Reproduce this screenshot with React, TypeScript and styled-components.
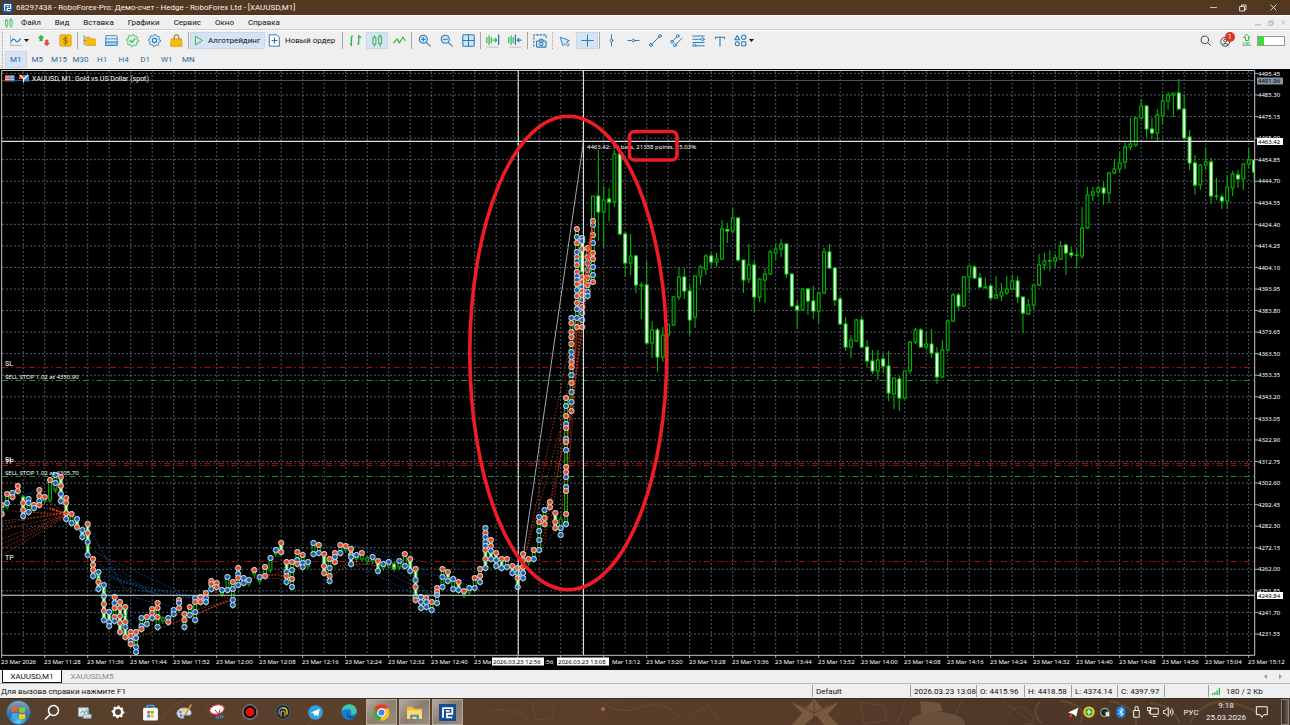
import React from "react";
import styled, { createGlobalStyle, css } from "styled-components";

const Global = createGlobalStyle`
  * { box-sizing: border-box; }
  body { margin: 0; background: #efefef; font-family: Roboto, "Noto Sans", sans-serif; font-size: 8px; color: #111; }
  button { font: inherit; color: inherit; border: 0; padding: 0; background: none; }
  svg { display: block; }
`;

const blue = "#2a7ab8";
const green = "#2db84a";

/* ---------- frame ---------- */

const Page = styled.div`
  display: flex;
  flex-direction: column;
  min-height: 100vh;
`;
const TitleBar = styled.header`
  display: flex;
  align-items: center;
  height: 15px;
  padding-left: 2px;
  gap: 3px;
  background: #523721;
  color: #f6f1ec;
`;
const Title = styled.h1`
  margin: 0;
  flex: 1;
  font-size: 8px;
  line-height: 12px;
  font-weight: 400;
  white-space: nowrap;
`;
const WindowButtons = styled.div`
  display: flex;
  padding-right: 2px;
`;
const WindowButton = styled.button`
  display: grid;
  place-items: center;
  width: 30px;
  height: 15px;
`;
const MenuBar = styled.nav`
  display: flex;
  align-items: center;
  height: 15px;
  padding-left: 4px;
  border-top: 1px solid #fff;
  border-bottom: 1px solid #cfcfcf;
`;
const MenuIcon = styled.span`
  width: 10px;
  margin-right: 7px;
`;
const MenuItem = styled.button`
  margin-right: 14px;
  line-height: 12px;
  white-space: nowrap;
`;
const MdiButtons = styled.div`
  display: flex;
  margin-left: auto;
`;
const MdiButton = styled.button`
  display: grid;
  place-items: center;
  width: 13px;
  height: 12px;
`;
const Toolbar = styled.div`
  display: flex;
  align-items: center;
  height: 20px;
  border-top: 1px solid #fff;
`;
const Handle = styled.span`
  width: 1px;
  height: 17px;
  margin: 0 2px;
  border-left: 1px dotted #9a9a9a;
`;
const Sep = styled.span<{ $dotted?: boolean }>`
  width: 1px;
  height: 17px;
  margin: 0 1px;
  border-left: 1px ${(p) => (p.$dotted ? "dotted" : "solid")} #a6a6a6;
`;
const Group = styled.div<{ $w: number }>`
  display: flex;
  width: ${(p) => p.$w}px;
`;
const active = css`
  background: #d5e3f2;
  box-shadow: inset 0 0 0 1px #c6d9ec;
`;
const Tool = styled.button<{ $on?: boolean }>`
  display: flex;
  flex: 1;
  min-width: 0;
  height: 17px;
  align-items: center;
  justify-content: center;
  gap: 2px;
  ${(p) => p.$on && active}
`;
const WideTool = styled.button<{ $on?: boolean; $w: number }>`
  display: flex;
  width: ${(p) => p.$w}px;
  height: 17px;
  align-items: center;
  gap: 4px;
  padding-left: 3px;
  white-space: nowrap;
  ${(p) => p.$on && active}
`;
const ToolRight = styled.div`
  display: flex;
  align-items: center;
  gap: 9px;
  margin-left: auto;
  padding-right: 5px;
`;
const Account = styled.button`
  position: relative;
  width: 14px;
  height: 14px;
`;
const Badge = styled.span`
  position: absolute;
  top: -2px;
  right: -1px;
  width: 10px;
  height: 10px;
  border-radius: 5px;
  background: #dc3620;
  color: #fff;
  font-size: 8px;
  line-height: 10px;
  text-align: center;
`;
const Level = styled.span`
  display: flex;
  flex-direction: column;
  align-items: center;
  color: ${green};
  font-size: 5px;
  font-weight: 700;
  line-height: 5px;
`;
const Battery = styled.span`
  width: 28px;
  height: 10px;
  margin-left: -3px;
  border: 1px solid #999;
  background: linear-gradient(90deg, #3adf3a 6px, #fff 6px);
`;
const FrameBar = styled.div`
  display: flex;
  align-items: center;
  height: 19px;
`;
const FrameButton = styled.button<{ $on?: boolean }>`
  flex: 1;
  height: 17px;
  color: #1f6ba5;
  ${(p) => p.$on && active}
`;
const ChartArea = styled.main`
  flex: 1;
  background: #000;
`;
const ChartSvg = styled.svg`
  width: 100%;
  height: auto;
  font-family: "Noto Sans", sans-serif;
  font-size: 6px;
  fill: #fff;
`;
const PlotLabels = styled.g`
  font-family: Roboto, sans-serif;
  font-size: 7px;
`;
const Tabs = styled.div`
  display: flex;
  align-items: center;
  height: 14px;
  padding-left: 2px;
  border-bottom: 1px solid #b8b8b8;
`;
const Tab = styled.button<{ $on?: boolean }>`
  width: 60px;
  height: 13px;
  color: ${(p) => (p.$on ? "#111" : "#8b8b8b")};
  ${(p) =>
    p.$on &&
    css`
      background: #fff;
      border: 1px solid #111;
      border-top: 0;
    `}
`;
const TabArrows = styled.span`
  display: flex;
  gap: 10px;
  margin-left: auto;
  padding-right: 8px;
`;
const Status = styled.footer`
  display: flex;
  align-items: center;
  height: 14px;
`;
const StatusHint = styled.span`
  flex: 1;
  padding-left: 1px;
`;
const StatusCell = styled.span<{ $w: number }>`
  display: flex;
  align-items: center;
  gap: 6px;
  width: ${(p) => p.$w}px;
  height: 12px;
  padding-left: 3px;
  border-left: 1px solid #9c9c9c;
  white-space: nowrap;
`;

/* ---------- task bar ---------- */

const TaskBar = styled.div`
  position: relative;
  display: flex;
  align-items: stretch;
  height: 27px;
  padding-left: 1px;
  border-top: 1px solid #3b2d20;
  background: linear-gradient(90deg, #56402d, #5c3f2a 35%, #583c28 60%, #4d3728 80%, #4a382a);
  color: #f5f0ea;
  overflow: hidden;
`;
const Texture = styled.svg`
  position: absolute;
  right: 0;
  top: 0;
  width: 1290px;
  height: 26px;
`;
const TaskButton = styled.button<{ $on?: boolean }>`
  position: relative;
  display: grid;
  place-items: center;
  width: 31px;
  margin-right: 2px;
  ${(p) =>
    p.$on &&
    css`
      border: 1px solid #b3a89c;
      background: linear-gradient(135deg, #b5aba1, #8b7c6e 50%, #9b8e82);
    `}
`;
const StartButton = styled.button`
  position: relative;
  width: 35px;
  display: grid;
  place-items: center;
`;
const Tray = styled.div`
  position: relative;
  display: flex;
  align-items: center;
  margin-left: auto;
`;
const TrayButton = styled.button`
  display: grid;
  place-items: center;
  width: 16px;
  height: 26px;
`;
const Lang = styled.button`
  width: 28px;
`;
const Clock = styled.button`
  width: 42px;
  line-height: 12px;
  font-size: 8px;
`;
const Notify = styled.button`
  display: grid;
  place-items: center;
  width: 30px;
  height: 26px;
`;
const Desktop = styled.button`
  width: 8px;
  height: 26px;
  margin: 0 1px 0 4px;
  border: 1px solid #8d8177;
  background: linear-gradient(90deg, #30261f, #6c6056);
`;

/* ---------- icons ---------- */

const Ico = ({ s = 13, c = blue, w = 1, vb = 16, children }: { s?: number; c?: string; w?: number; vb?: number; children: React.ReactNode }) => (
  <svg width={s} height={s} viewBox={`0 0 ${vb} ${vb}`} fill="none" stroke={c} strokeWidth={w} strokeLinecap="round" strokeLinejoin="round">
    {children}
  </svg>
);
const Down = () => (
  <svg width="5" height="3" viewBox="0 0 5 3"><path d="M0 0h5L2.5 3z" fill="#111" /></svg>
);
const RoboLogo = ({ s = 12 }: { s?: number }) => (
  <svg width={s} height={s} viewBox="0 0 16 16">
    <rect width="16" height="16" fill="#134e90" />
    <path d="M3.800 13V3.800h8.700v5.400H7.500v3.300h5M6.500 6.500h3.500" fill="none" stroke="#fff" strokeWidth="1.700" />
  </svg>
);
const Candles = ({ s = 13 }: { s?: number }) => (
  <Ico s={s} c={green} w={1.3}>
    <rect x="2.500" y="4" width="3.500" height="8.500" rx=".6" /><rect x="9.500" y="3" width="3.500" height="9" rx=".6" />
    <path d="M4.200 2v2M4.200 12.500V15M11.200 1v2M11.200 12v3" />
  </Ico>
);
const gearPath = Array.from({ length: 32 }, (_, i) => {
  const r = i % 4 < 2 ? 7.4 : 5.9;
  const a = (i * Math.PI) / 16;
  return `${i ? "L" : "M"}${(8 + r * Math.cos(a)).toFixed(2)} ${(8 + r * Math.sin(a)).toFixed(2)}`;
}).join("") + "z";

const NodeLine = ({ d, pts }: { d: string; pts: [number, number][] }) => (
  <Ico w={1.2}>
    <path d={d} />
    {pts.map(([x, y], i) => <circle key={i} cx={x} cy={y} r="1.700" fill="#efefef" />)}
  </Ico>
);
const Restore = ({ s, c }: { s: number; c: string }) => (
  <Ico s={s} c={c} w={1.6}><path d="M2 5h9v9H2zM5 5V2h9v9h-3" strokeLinejoin="miter" /></Ico>
);
const Cross = ({ s, c }: { s: number; c: string }) => <Ico s={s} c={c} w={1.8}><path d="M2 2l12 12M14 2L2 14" /></Ico>;

/* ---------- chart data ---------- */

const STEP = 5.375;
const cx = (i: number) => 1.7 + STEP * i;

// [index, high, body top, body bottom, low, falling]
type Bar = [number, number, number, number, number, 0 | 1];
const bars: Bar[] = [
  [110,196,196,283,285,0],[111,150,196,212,241,1],[112,186,200,212,248,0],[113,188,199,202,221,1],[114,150,154,202,207,0],[115,154,154,234,235,1],
  [116,232,234,263,277,1],[117,234,256,263,275,0],[118,255,256,285,293,1],[119,282,285,286,319,0],[120,261,285,343,345,1],[121,321,330,343,358,0],
  [122,328,330,357,372,1],[123,327,335,357,362,0],[124,325,325,335,338,0],[125,296,297,325,326,0],[126,267,277,297,300,0],[127,268,277,291,299,1],
  [128,285,291,320,335,1],[129,275,276,317,328,0],[130,265,267,276,285,0],[131,254,256,269,275,0],[132,253,256,262,267,1],[133,253,259,262,267,0],
  [134,220,229,259,260,0],[135,223,229.500,231,243,1],[136,208,218,231,234,0],[137,218,218,260,262,1],[138,260,260,280,293,1],[139,244,265,279,283,0],
  [140,261,265,297,312,1],[141,278,279,297,302,0],[142,268,274,280,303,0],[143,250,252,274,275,0],[144,243,249,253,261,0],[145,239,244,249,257,0],
  [146,244,244,274,278,1],[147,274,274,306,307,1],[148,301,306,310,329,1],[149,288,289,310,311,0],[150,288,289,301,315,1],[151,286,301,311,319,1],
  [152,292,293,311,323,0],[153,248,252,293,294,0],[154,244,252,268,269,1],[155,268,268,300,306,1],[156,297,299,324,325,1],[157,317,324,347,351,1],
  [158,335,340,347,358,0],[159,319,320,341,342,0],[160,317,320,347,348,1],[161,340,347,361,367,1],[162,350,361,371,374,1],[163,350,360,371,380,0],
  [164,354,359,366,373,1],[165,351,366,393,401,1],[166,378,378,394,409,0],[167,376,379,398,411,1],[168,371,371,398,399,0],[169,341,342,371,374,0],
  [170,328,330,342,344,0],[171,328,330,347,348,1],[172,333,344,347,350,0],[173,329,344,353,358,1],[174,347,353,377,384,1],[175,340,350,377,378,0],
  [176,320,321,350,351,0],[177,293,295,321,322,0],[178,293,295,306,310,1],[179,276,277,306,307,0],[180,266,266,277,293,0],[181,265,267,278,279,1],
  [182,273,278,287,288,1],[183,278,287,287.500,289,0],[184,284,286,298,301,1],[185,276,295,298,299,0],[186,283,292,296,301,0],[187,276,289,293,295,0],
  [188,275,281,289,290,0],[189,276,281,297,303,1],[190,297,297,313,333,1],[191,299,305,314,315,0],[192,285,285,305,310,0],[193,254,265,285,286,0],
  [194,253,261,265,270,0],[195,250,260.500,261,271,0],[196,254,258,261,267,0],[197,241,246,259,260,0],[198,244,245,253,275,1],[199,247,253,255,258,1],
  [200,248,255,255.500,268,0],[201,207,228,256,259,0],[202,187,195,228,229,0],[203,187,192,195,201,0],[204,186,188,192,197,0],[205,182,188,193,205,1],
  [206,172,173,193,203,0],[207,159,169,173,174,0],[208,151,163,169,173,0],[209,142,147,162,169,0],[210,118,144,147,150,0],[211,117,118,145,147,0],
  [212,99,106,118,119,0],[213,105,106,129,138,1],[214,118,129,133,139,1],[215,109,115,133,141,0],[216,94,101,116,124,0],[217,92,95,101,110,0],
  [218,93,93,95,117,0],[219,79,93,109,110,1],[220,94,109,138,139,1],[221,130,137,163,170,1],[222,155,163,185,195,1],[223,164,165,185,190,0],
  [224,148,162,165,170,0],[225,158,162,196,204,1],[226,178,196,196.500,200,0],[227,194,197,201,209,1],[228,175,187,201,209,0],[229,171,174,188,196,0],
  [230,170,175,179,188,1],[231,164,164,179,190,0],[232,148,160,164,168,0],[233,159,160,172,183,1],
];

// deals placed on each bar: r = sell, b = buy, followed by the height on the plot
const deals = `r505 r514|r494 b503|b493 r497|r486 r491|r503 r510 b516|b499 b503 b512|r505 b508|r490 r496 b501 r505|r497|r480|b475 b483
|r477 r486 b494 b501|r498 r503 r513 b519|r514 b523|b519 r527|b530 b537|r524 r533 b542 b555|r559 r565 r570 b576|b572 r582 b589|b585 b596 r604 r611 b620|b612 b622 b626
|r597 b603 r608 r617 b621|r602 r608 r616 r623 r632|r607 r622 b627 r637|r632 r636 b641 r644|r632 b638 b647 b652|b618 b626 r629|r617 b624|r609 r613 b618|r603 r608 r617 b627|
|b618 r622|b610 b614|r600 b603 r608|r614 r620 b627|r607 b615|b598 r602 b612 b620|r597 r602|r593 b598 b602|r581 r584 b589|r583 r587
|b590|b577 b590|r582 b589 b600 b605|r568 b574 r578 b585|b578 b583|b580|r570|b577|r567 r576|b558
|b550|r543 r552|r562 b572 r576 b582|r562 b570 r579 b587|r552 b560 r564|r555 b563 b567|b562|b543 b554|r545 b553|r554 r566 r573
|r559 b568 r576 b581|r553 b557 r562|r545 b553|r546|r549 r555 b557 b564|b555|r553||b557|r561 b571
|b564|b562||b561|r554 b566|r559 b571|r569 b580 r587 b597 r600|b597 b602 b608|r598 b602 b607|r602 b610
|r588 r592 b595 b603|r569 b577 b587|r572 b581|b579 b589|r582 b590|r591|b588|r578 b588|r569 r576 b582|b528 r533 b537 b542 b546 r550 r559 b568
|r540 r546 b551 b559|r553 b560 b566|r559 b568|r559 b567|r566 b573|r568 b573 r578 b587|r554 r560 r567 b573 b578|r559|r550 b559|b517 r522 b531 b540 b550
|b510 r518 r524|r502 r507|r513 r522 r528|b528 b535|r398 b406 r416 b424 r428 b439 r442 b450 r467 r472 b477 b487 r491 r514 b524|b318 r323 r332 r337 r344 b352 b357 r362 r367 b375 r383 b392 b402 r411|r229 b237 r243 b252 r257 b261 r265 r272 b276 b280 r284 b290 r296 r303 b309 b318 r327|b238 b241 r249 r277 r282 b287 r291 r295 b300 r307 b313 b320 r327|r248 r257 b263 b270 r278 r285 b292 b296|r221 b225 r235 b243 r253 r259 b267 b275 r282`
  .replace(/\n/g, "")
  .split("|")
  .map((s) => s.split(" ").filter(Boolean).map((t) => ({ sell: t[0] === "r", y: Number(t.slice(1)) })));

const falling = new Set([4, 11, 12, 14, 15, 16, 17, 18, 19, 20, 22, 23, 24, 40, 45, 52, 53, 60, 65, 70, 73, 76, 77, 83, 85, 90, 91, 92, 93, 95, 96, 103, 108]);
const spans: Record<number, [number, number]> = { 1: [494, 507], 4: [497, 517], 9: [482, 500], 10: [475, 490], 30: [618, 621], 50: [558, 570], 68: [558, 561], 73: [564, 569], 64: [546, 550], 67: [552, 559], 74: [561, 567], 108: [238, 272], 104: [519, 535] };

const leftBars: Bar[] = deals.slice(0, 110).map((d, i) => {
  const ys = d.map((m) => m.y);
  const [t, b] = spans[i] ?? [Math.min(...ys), Math.max(...ys) + (d.length === 1 ? 4 : 1)];
  return [i, t - 2, t, b, b + 3, falling.has(i) ? 1 : 0];
});

const sellLinks = [
  [2,521,66,514],[2,530,66,515],[2,539,66,515],[2,549,66,516],[2,555,64,518],[2,524,66,512],[2,544,64,516],[34,505,66,514],[46,500,66,513],[12,511,66,514],[24,512,66,515],[55,488,66,513],
  [137,638,233,599],[152,622,232,600],[173,623,232,600],[190,617,228,600],[212,591,232,600],[262,577,286,572],[262,578,286,579],[245,580,265,575],[328,578,345,567],[330,560,412,570],[340,566,398,562],[262,574,286,576],
  [519,578,560,430],[519,585,571,340],[545,540,577,320],[550,526,582,310],[566,520,577,300],[567,490,583,290],[571,410,588,262],[573,400,590,262],[577,330,593,222],[580,327,593,222],[583,327,593,228],[583,295,593,224],[588,296,593,222],[540,552,571,410],[561,522,577,330],[532,558,561,525],[566,460,577,330],[570,420,583,325],[583,320,593,235],[578,300,593,222],[585,262,593,223],[584,300,592,240],
];
const buyLinks = [
  [87,525,120,582],[89,528,125,590],[87,545,150,592],[92,558,140,600],[97,570,160,596],[98,575,200,599],[103,585,200,600],[98,578,135,630],[104,590,133,625],[120,582,200,600],[108,592,170,606],[100,565,150,592],[95,552,190,597],[108,585,140,625],
  [24,496,58,478],[12,497,40,492],[205,592,235,575],[342,543,430,563],[345,543,425,570],[313,543,345,550],[345,550,440,600],[380,558,436,598],[400,560,436,604],[412,571,480,583],[442,575,475,588],[485,528,518,565],[485,542,518,578],[487,550,515,560],[300,555,312,546],[258,578,270,560],[345,560,432,602],
];
// stretches where the links meet and read as one solid trail
const sellTrails = [[593,222,587,262],[587,262,583,300],[592,226,588,275],[66,514,50,508]];

const H0 = 73.4;
const HS = 21.56;
const pad = (n: number) => String(n).padStart(2, "0");
const timeLabel = (k: number) => {
  if (k === 0) return "23 Mar 2026";
  const m = 11 * 60 + 20 + 8 * k;
  return `23 Mar ${pad(Math.floor(m / 60))}:${pad(m % 60)}`;
};
// labels partly hidden by the crosshair dates keep only their free part
const cutLabels: Record<number, [string, number]> = { 11: ["23 Ma", 474], 12: [":56", 545], 13: ["", 560], 14: ["Mar 13:12", 612] };

const Candle = ({ bar: [i, h, t, b, l, down] }: { bar: Bar }) => (
  <g stroke={down ? "#1fd81f" : "#00b800"} strokeWidth="1.100">
    <path d={`M${cx(i)} ${h}V${t}M${cx(i)} ${b}V${l}`} stroke="#00b400" />
    <rect x={cx(i) - 1.4} y={t} width="2.800" height={Math.max(b - t, 0.4)} fill={down ? "#fff" : "#000"} />
  </g>
);
const Deal = ({ x, y, sell }: { x: number; y: number; sell: boolean }) => (
  <g>
    <path d={`M${x - 1.2} ${y - 3}h2.400l1.800 1.800v2.400l-1.800 1.800h-2.400l-1.800 -1.800v-2.400z`} fill="#c3cdd8" />
    <path d={`M${x} ${y - 2.6}l2.600 2.600l-2.600 2.600l-2.600 -2.600z`} fill={sell ? "#f04818" : "#1463b4"} />
  </g>
);

const Chart = () => (
  <ChartSvg viewBox="0 69 1290 601" role="img" aria-label="XAUUSD M1">
    <defs><clipPath id="plot"><rect x="2" y="71" width="1252" height="584" /></clipPath></defs>
    <g stroke="#6b7b8b" strokeWidth=".75" strokeDasharray="2 2">
      {Array.from({ length: 27 }, (_, k) => <path key={k} d={`M2 ${H0 + HS * k}H1254`} />)}
      {Array.from({ length: 58 }, (_, k) => <path key={k} d={`M${23.2 + 21.5 * k} 71V655`} />)}
    </g>
    <path d="M2 80.500H1254" stroke="#46525f" strokeWidth="1.200" />
    <g strokeWidth="1" strokeDasharray="6 3 1.500 3">
      <path d="M2 367.500H1254M2 463.500H1254M2 465.500H1254M2 561.500H1254" stroke="#a00c0c" />
      <path d="M2 380.500H1254M2 476.500H1254" stroke="#1f8f1f" />
    </g>
    <path d="M518.300 590L583.300 143" stroke="#b8b8b8" strokeWidth=".9" />
    <g clipPath="url(#plot)">
      {leftBars.map((b) => <Candle key={b[0]} bar={b} />)}
      {bars.map((b) => <Candle key={b[0]} bar={b} />)}
      <g fill="none" strokeWidth=".8" strokeDasharray="1.600 1.600">
        {buyLinks.map(([a, b, c, d], i) => <path key={i} d={`M${a} ${b}L${c} ${d}`} stroke="#0f4c86" />)}
        {sellLinks.map(([a, b, c, d], i) => <path key={i} d={`M${a} ${b}L${c} ${d}`} stroke="#c23a14" />)}
      </g>
      {deals.map((d, i) => d.map((m, j) => <Deal key={`${i}-${j}`} x={cx(i)} y={m.y} sell={m.sell} />))}
      {sellTrails.map(([a, b, c, d], i) => <path key={i} d={`M${a} ${b}L${c} ${d}`} stroke="#e8471a" strokeWidth="1.500" strokeDasharray="3 1" />)}
    </g>
    <path d="M518.300 71V655M583.500 71V655M2 141.400H1254M2 595.300H1254" stroke="#dcdcdc" strokeWidth="1.100" />
    <path d="M1.700 655.300V70.500H1254.700V655.300H1.700" fill="none" stroke="#c4c8c0" strokeWidth="1" />
    {Array.from({ length: 27 }, (_, k) => (
      <g key={k}>
        <path d={`M1255 ${H0 + HS * k}h3`} stroke="#ccc" strokeWidth=".8" />
        <text x="1258" y={H0 + HS * k + 2.2}>{(4495.45 - 10.15 * k).toFixed(2)}</text>
      </g>
    ))}
    {Array.from({ length: 30 }, (_, k) => {
      const [text, x] = cutLabels[k] ?? [timeLabel(k), 1 + 43 * k];
      return (
        <g key={k}>
          <path d={`M${1.7 + 43 * k} 655v3`} stroke="#ccc" strokeWidth=".8" />
          {text && <text x={x} y="663.500">{text}</text>}
        </g>
      );
    })}
    <rect x="1257" y="77.500" width="26" height="7" fill="#8494a6" />
    <text x="1258" y="83.200" fill="#000">4491.96</text>
    {[["4463.42", 138], ["4249.84", 592]].map(([t, y]) => (
      <g key={t}>
        <rect x="1257" y={y} width="26" height="7" fill="#fff" />
        <text x="1258" y={Number(y) + 5.700} fill="#000">{t}</text>
      </g>
    ))}
    {[["2026.03.23 12:56", 492], ["2026.03.23 13:08", 557]].map(([t, x]) => (
      <g key={t}>
        <rect x={x} y="657.500" width="52" height="8" fill="#fff" />
        <text x={Number(x) + 1} y="663.500" fill="#000">{t}</text>
      </g>
    ))}
    <g>
      <rect x="5" y="75" width="4.500" height="6.500" fill="#e8473f" /><rect x="9.500" y="75" width="5" height="6.500" fill="#3f86c8" />
      <path d="M5 77h9.500M5 79.300h9.500" stroke="#fff" strokeWidth=".7" />
      <rect x="19" y="75" width="5" height="4" fill="#e8473f" /><rect x="24" y="75" width="5" height="6.500" fill="#3f86c8" />
      <path d="M20 75l3.500 3.500v4M28 75l-4 4" fill="none" stroke="#fff" strokeWidth="1.100" />
    </g>
    <PlotLabels>
      <text x="32" y="80.500">XAUUSD, M1: Gold vs US Dollar (spot)</text>
      <text x="5" y="366">SL</text>
      <text x="5" y="462">SL</text>
      <text x="5" y="464">TP</text>
      <text x="5" y="560">TP</text>
    </PlotLabels>
    <text x="5" y="378.700">SELL STOP 1.02 at 4350.90</text>
    <text x="5" y="474.700">SELL STOP 1.02 at 4305.70</text>
    <text x="587" y="148.500">4463.42: 12 bars, 21358 points, +5.03%</text>
    <g fill="none" stroke="#ee1c25" strokeWidth="3.600">
      <ellipse cx="568.300" cy="353" rx="98.500" ry="236.800" />
      <rect x="629.500" y="131.500" width="47.500" height="28.500" rx="5" />
    </g>
  </ChartSvg>
);

const WallTexture = () => (
  <Texture viewBox="0 0 1290 26" fill="none">
    <g stroke="#84603f" strokeWidth="1" opacity=".4">
      <path d="M205 8l8 10M240 24l9-14 10 10M300 4q18 14 8 22M480 24q16-22 34-8M512 11l14 5 2 8M532 3l4 18 16-2 2-12M600 2q20 16 42 6 20-8 38 10M690 18l18-12 10 14" />
      <path d="M70 5q14 4 12 20M110 3q20 10 24 22M160 24q10-20 24-22M860 3l24 4 3 14-23 4zM905 4l-8 20M962 2l-10 20M1002 2l32 22M1008 16q12-16 22-2t-6 10" />
      <path d="M1040 3q-10 10 2 22M1060 2q30 4 20 22M1110 2q28 6 26 24M1150 4q22 2 30 20M1190 24q14-26 42-20t30 18" strokeWidth="2" />
    </g>
    <path d="M790 2l16 7 8-9 8 9 18-7-12 13 10 11h-14l-8-10-12 10h-12l10-12z" fill="#9c7a5a" opacity=".5" />
    <path d="M814 2v22M790 2l24 12 26-12" stroke="#4a3322" opacity=".7" />
    <ellipse cx="937" cy="25" rx="28" ry="12" fill="#8c7258" opacity=".4" />
    <path d="M920 2l20 2 3 8-22 3z" fill="#8f6e50" opacity=".5" />
    <circle cx="603" cy="10" r="2" fill="#b06a3a" />
  </Texture>
);

export default function App() {
  return (
    <Page>
      <Global />
      <TitleBar>
        <RoboLogo s={11} />
        <Title>68297438 - RoboForex-Pro: Демо-счет - Hedge - RoboForex Ltd - [XAUUSD,M1]</Title>
        <WindowButtons>
          <WindowButton aria-label="Свернуть"><Ico s={7} c="#fff" w={1.6}><path d="M1 8h14" /></Ico></WindowButton>
          <WindowButton aria-label="Развернуть"><Restore s={8} c="#fff" /></WindowButton>
          <WindowButton aria-label="Закрыть"><Cross s={7} c="#fff" /></WindowButton>
        </WindowButtons>
      </TitleBar>
      <MenuBar>
        <MenuIcon><Candles s={10} /></MenuIcon>
        {["Файл", "Вид", "Вставка", "Графики", "Сервис", "Окно", "Справка"].map((m) => <MenuItem key={m}>{m}</MenuItem>)}
        <MdiButtons>
          <MdiButton aria-label="Свернуть график"><Ico s={6} c="#999" w={2}><path d="M1 13h14" /></Ico></MdiButton>
          <MdiButton aria-label="Восстановить график"><Restore s={6} c="#999" /></MdiButton>
          <MdiButton aria-label="Закрыть график"><Cross s={5} c="#999" /></MdiButton>
        </MdiButtons>
      </MenuBar>
      <Toolbar>
        <Handle />
        <Group $w={27}>
          <Tool><Ico><path d="M2 2v12h13" stroke="#9aa3aa" /><path d="M3 9q2.500-5 5 -1t6-2" strokeWidth="1.500" /></Ico><Down /></Tool>
        </Group>
        <Group $w={44}>
          <Tool><Ico><path d="M5 1l4 4H7v4H3V5H1z" fill={green} stroke="none" /><path d="M12 15l-4-4h2V7h4v4h2z" fill="#ea4a4a" stroke="none" /></Ico></Tool>
          <Tool><Ico><rect x="1" y="1" width="14" height="14" rx="1.500" fill="#f8bd0c" stroke="#e0a400" /><path d="M10.500 5.500Q8 3.500 6 5.500T8 8t2 2.700-4.500-.2M8 3v10" stroke="#946900" strokeWidth="1.200" /></Ico></Tool>
        </Group>
        <Sep />
        <Group $w={108}>
          <Tool><Ico><path d="M1.500 2v11M1.500 8H4" stroke="#777" /><path d="M4 4h4l1.500 2H15v8H4z" fill="#f8bd0c" stroke="#d99e00" /></Ico></Tool>
          <Tool><Ico><rect x="1" y="2" width="14" height="12" rx="1" fill="#e2f0fb" /><path d="M1 6h14M1 10h14" /><path d="M1 10h14v4H1z" fill="#a7d3f2" /></Ico></Tool>
          <Tool><Ico c={green} w={1.1}><path d={gearPath} fill="#ddf5e0" /><path d="M5 8l2.300 2.300L11 6" strokeWidth="1.500" /></Ico></Tool>
          <Tool><Ico w={1.1}><path d={gearPath} fill="#d8ebf9" /><circle cx="8" cy="8" r="2.500" fill="#fff" strokeWidth="1.500" /></Ico></Tool>
          <Tool><Ico><path d="M2 6h12l1 9H1z" fill="#f8bd0c" stroke="#d99e00" /><path d="M5 6q0-5 3-5t3 5" stroke="#8f7a40" strokeWidth="1.300" /></Ico></Tool>
        </Group>
        <Sep />
        <WideTool $on $w={75}><Ico s={11} c={green} w={1.4}><path d="M4 2l10 6-10 6z" /></Ico>Алготрейдинг</WideTool>
        <WideTool $w={76}><Ico s={13} w={1.2}><path d="M2 1h9l3 3v11H2z" fill="#fff" /><path d="M8 5v6M5 8h6" strokeWidth="1.500" /></Ico>Новый ордер</WideTool>
        <Sep />
        <Group $w={66}>
          <Tool><Ico w={1.2} c={green}><path d="M3 15V3h2M3 12H1M12 1v11h-2M12 4h3" strokeLinecap="butt" strokeWidth="1.600" /></Ico></Tool>
          <Tool $on><Candles /></Tool>
          <Tool><Ico w={1.5} c={green}><path d="M1 11l4-5 3 5 4-7 3 4" /></Ico></Tool>
        </Group>
        <Sep />
        <Group $w={66}>
          <Tool><Ico w={1.3}><circle cx="6.500" cy="6.500" r="5" fill="#cfe6f7" /><path d="M10.500 10.500L15 15M4 6.500h5M6.500 4v5" /></Ico></Tool>
          <Tool><Ico w={1.3}><circle cx="6.500" cy="6.500" r="5" fill="#cfe6f7" /><path d="M10.500 10.500L15 15M4 6.500h5" /></Ico></Tool>
          <Tool><Ico w={1.3}><rect x="1" y="1" width="14" height="14" rx="1" fill="#cfe6f7" /><path d="M8 1v14M1 8h14" /></Ico></Tool>
        </Group>
        <Sep />
        <Group $w={44}>
          <Tool><Ico s={14}><path d="M1 4v6M3.500 2v10M6 4v6M8 7h4M10.500 5l2 2-2 2" stroke={green} strokeWidth="1.400" /><path d="M14.500 1v11" strokeWidth="1.400" /><path d="M1 15h13" stroke="#bbb" /></Ico></Tool>
          <Tool><Ico s={14}><path d="M1 4v6M3.500 2v10M6 4v6" stroke={green} strokeWidth="1.400" /><path d="M8.500 1v11M10.500 7H15M12.500 5l-2 2 2 2" strokeWidth="1.300" /><path d="M2 15h13" stroke="#bbb" /></Ico></Tool>
        </Group>
        <Sep />
        <Group $w={22}>
          <Tool><Ico s={14} w={1.2}><path d="M1 14V1h14v4" strokeDasharray="2 2" /><rect x="4" y="8" width="11" height="7" rx="1" fill="#cfe6f7" /><path d="M7 8l1-2h3l1 2" /><circle cx="9.500" cy="11.300" r="1.800" /></Ico></Tool>
        </Group>
        <Sep $dotted />
        <Group $w={44}>
          <Tool><Ico s={12} w={1.2}><path d="M2 3l12 4.500-4 2 3.500 3.500-2 2L8 11.500 5.500 14z" fill="#cfe6f7" /></Ico></Tool>
          <Tool $on><Ico w={1.2}><path d="M8 1v14M1 8h14" /><circle cx="8" cy="8" r="1" fill={blue} /></Ico></Tool>
        </Group>
        <Sep />
        <Group $w={130}>
          <Tool><NodeLine d="M8 1v14" pts={[[8, 8]]} /></Tool>
          <Tool><NodeLine d="M1 8h14" pts={[[8, 8]]} /></Tool>
          <Tool><NodeLine d="M2.500 13.500l11-11" pts={[[2.5, 13.5], [13.5, 2.5]]} /></Tool>
          <Tool><NodeLine d="M2.500 9.500l7-7M6 14l9-9" pts={[[2.5, 9.5], [9.500, 2.5], [6, 14]]} /></Tool>
          <Tool><NodeLine d="M1 2.500h14M1 6.500h14M1 10.500h14M1 14.500h14" pts={[[13, 6.5], [3, 14]]} /></Tool>
          <Tool><Ico s={12} w={1.4}><path d="M2 3h12M8 3v12M2 3v1.500M14 3v1.500" /></Ico></Tool>
        </Group>
        <Group $w={26}>
          <Tool><Ico w={1.3}><path d="M1 7l3-5 3 5z" /><circle cx="12" cy="4" r="2.700" /><circle cx="4" cy="12" r="2.500" /><rect x="9.500" y="9.500" width="5" height="5" /></Ico><Down /></Tool>
        </Group>
        <ToolRight>
          <Ico s={11} c="#444" w={1.4}><circle cx="7" cy="7" r="5.500" /><path d="M11 11l4 4" /></Ico>
          <Account aria-label="Аккаунт">
            <Ico s={12} c="#444" w={1.3}><circle cx="7" cy="9" r="6" /><circle cx="7" cy="7.500" r="2" /><path d="M3 13q4-4 8 0" /></Ico>
            <Badge>1</Badge>
          </Account>
          <Level>
            <Ico s={8} c={green} w={2}><path d="M8 1l6 6h-3v6H5V7H2z" /></Ico>
            LVL
          </Level>
          <Battery />
        </ToolRight>
      </Toolbar>
      <FrameBar>
        <Handle />
        <Group $w={194}>
          {["M1", "M5", "M15", "M30", "H1", "H4", "D1", "W1", "MN"].map((t, i) => <FrameButton key={t} $on={i === 0}>{t}</FrameButton>)}
        </Group>
      </FrameBar>
      <ChartArea><Chart /></ChartArea>
      <Tabs>
        <Tab $on>XAUUSD,M1</Tab>
        <Tab>XAUUSD,M5</Tab>
        <TabArrows>
          <svg width="4" height="5" viewBox="0 0 4 5"><path d="M3 0v5L0 2.500z" fill="#999" /></svg>
          <svg width="4" height="5" viewBox="0 0 4 5"><path d="M1 0v5l3-2.500z" fill="#999" /></svg>
        </TabArrows>
      </Tabs>
      <Status>
        <StatusHint>Для вызова справки нажмите F1</StatusHint>
        <StatusCell $w={98}>Default</StatusCell>
        <StatusCell $w={66}>2026.03.23 13:08</StatusCell>
        <StatusCell $w={48}>O: 4415.96</StatusCell>
        <StatusCell $w={47}>H: 4418.58</StatusCell>
        <StatusCell $w={46}>L: 4374.14</StatusCell>
        <StatusCell $w={47}>C: 4397.97</StatusCell>
        <StatusCell $w={44} />
        <StatusCell $w={82}>
          <svg width="8" height="7" viewBox="0 0 8 7"><path d="M.7 7V5M2.900 7V4M5.100 7V2.500M7.300 7V0" stroke={green} strokeWidth="1.300" /></svg>
          180 / 2 Kb
        </StatusCell>
      </Status>
      <TaskBar>
        <WallTexture />
        <StartButton aria-label="Пуск">
          <svg width="25" height="25" viewBox="0 0 25 25">
            <defs><radialGradient id="orb" cx=".5" cy=".9" r=".9"><stop offset="0" stopColor="#5cd0f2" /><stop offset=".5" stopColor="#2b6ea4" /><stop offset="1" stopColor="#8fa9ba" /></radialGradient></defs>
            <circle cx="12.500" cy="12.500" r="12" fill="url(#orb)" stroke="#234a68" strokeWidth=".6" />
            <path d="M5.500 7.500q3-2 6.300-.8v5.300q-3.300-1-6.300.5z" fill="#f0642a" /><path d="M13 7q3 1.500 6.300 0v5.300q-3.300 1.300-6.300 0z" fill="#8cc63f" />
            <path d="M5.500 13.700q3-1.500 6.300-.5v5.300q-3.300-1-6.300.5z" fill="#3fa5e8" /><path d="M13 13.500q3 1.300 6.300 0v5q-3.300 1.500-6.300.2z" fill="#fbc81e" />
          </svg>
        </StartButton>
        <TaskButton aria-label="Поиск"><Ico s={16} c="#fff" w={1.5}><circle cx="9.500" cy="6.500" r="5" /><path d="M6 10.500L1.500 15" /></Ico></TaskButton>
        <TaskButton aria-label="Просмотр"><Ico s={15}><path d="M2 3h10v9H2z" fill="#e6edf2" stroke="#9fb0bc" /><path d="M4 9l2-3 2 3 2-4 2 4" stroke="#4a90c2" /><path d="M7 10h8v4H7z" fill="#cfd9df" stroke="#9fb0bc" /></Ico></TaskButton>
        <TaskButton aria-label="Параметры"><Ico s={14} c="#fff" w={1.6}><path d={gearPath} fill="#fff" stroke="none" /><circle cx="8" cy="8" r="3.400" fill="#5a402c" stroke="none" /></Ico></TaskButton>
        <TaskButton aria-label="Магазин"><Ico s={17}><path d="M5 4V1.500h6V4" stroke="#35a3e0" strokeWidth="1.400" /><rect x="1" y="3.500" width="14" height="12" rx="1.500" fill="#f6f6f6" stroke="none" /><path d="M5 6.500h2.600v2.600H5z" fill="#f25022" stroke="none" /><path d="M8.400 6.500H11v2.600H8.400z" fill="#7fba00" stroke="none" /><path d="M5 10h2.600v2.600H5z" fill="#00a4ef" stroke="none" /><path d="M8.400 10H11v2.600H8.400z" fill="#ffb900" stroke="none" /></Ico></TaskButton>
        <TaskButton aria-label="Рисование"><Ico s={16}><path d="M1 9q1-5 7-5t7 4-4 3-3 3Q1 15 1 9z" fill="#cfe3f0" stroke="#8fb2c8" /><circle cx="4.500" cy="8" r="1.300" fill="#e84a3a" stroke="none" /><circle cx="8" cy="6.500" r="1.300" fill="#f6c21c" stroke="none" /><circle cx="5" cy="11.500" r="1.300" fill="#2f7fd0" stroke="none" /><path d="M15 1l-6 10" stroke="#d8903a" strokeWidth="1.600" /></Ico></TaskButton>
        <TaskButton aria-label="Ножницы"><Ico s={16}><ellipse cx="8" cy="5.500" rx="7.300" ry="4.500" fill="#fff" stroke="#e23b45" transform="rotate(-12 8 5.500)" /><path d="M6 6l5 6M11 6l-2 6" stroke="#a4323a" /><circle cx="8.500" cy="13.500" r="1.300" stroke="#3494d0" /><circle cx="12.500" cy="12.500" r="1.500" stroke="#3494d0" /></Ico></TaskButton>
        <TaskButton aria-label="Запись"><Ico s={16}><circle cx="8" cy="8" r="7.200" fill="#111" stroke="#9b9b9b" /><circle cx="8" cy="8" r="4.300" fill="#ee0d0d" stroke="none" /></Ico></TaskButton>
        <TaskButton aria-label="Наушники"><Ico s={16}><circle cx="8" cy="8" r="7.300" fill="#23262b" stroke="#57606a" /><path d="M4 10V8q0-4 4-4" stroke="#4a86d8" strokeWidth="1.500" /><path d="M8 4q4 0 4 4v2" stroke="#b8d432" strokeWidth="1.500" /><path d="M6 12V9q0-2 2-2t2 2v3" stroke="#e0a020" strokeWidth="1.200" /></Ico></TaskButton>
        <TaskButton aria-label="Telegram"><Ico s={15}><circle cx="8" cy="8" r="7.800" fill="#2fa3dc" stroke="none" /><path d="M3 8l9.500-4-1.700 8.500L8 10.400l-1.400 1.400-.4-2.700z" fill="#fff" stroke="none" /></Ico></TaskButton>
        <TaskButton aria-label="Edge"><Ico s={16}><circle cx="8" cy="8" r="7.700" fill="#1480d2" stroke="none" /><path d="M.6 7Q2 .3 8.500.3 15.500 1 15.700 7.500 15 11 10 10.300q1.500-5-3-5.300-4 0-6.400 2z" fill="#45c9a4" stroke="none" /><path d="M6 8q-1 5 4 6.500 3-.5 4.500-3-4 2-6.500 0Q6.300 10 7 7.500z" fill="#0c4f96" stroke="none" /></Ico></TaskButton>
        <TaskButton $on aria-label="Chrome"><Ico s={17}><circle cx="8" cy="8" r="7.700" fill="#fbc116" stroke="none" /><path d="M1.300 4.200A7.700 7.700 0 0 1 14.700 4.300H8L4.500 10z" fill="#e33b2e" stroke="none" /><path d="M1.300 4.200L4.800 10 8 12l-1.300 3.600A7.700 7.700 0 0 1 1.300 4.200z" fill="#2da94f" stroke="none" /><circle cx="8" cy="8" r="3.500" fill="#3f82f0" stroke="#fff" strokeWidth="1.200" /></Ico></TaskButton>
        <TaskButton $on aria-label="Проводник"><Ico s={17}><path d="M1 2.500h5l1.500 2H15V14H1z" fill="#f4bd35" stroke="none" /><path d="M1 6h14v8H1z" fill="#fddc72" stroke="none" /><path d="M4 14v-4h8v4h-2v-2H6v2z" fill="#3b8ed6" stroke="none" /></Ico></TaskButton>
        <TaskButton $on aria-label="RoboForex"><RoboLogo s={17} /></TaskButton>
        <Tray>
          <TrayButton aria-label="Отправка"><Ico s={11}><path d="M0 8l15-7-3 13-4-3.500z" fill="#fff" stroke="none" /><circle cx="4" cy="13" r="2.300" fill="#e03a2a" stroke="none" /></Ico></TrayButton>
          <TrayButton aria-label="Антивирус"><Ico s={12}><circle cx="8" cy="8" r="7.500" fill="#f5d01f" stroke="none" /><circle cx="8" cy="8" r="5" fill="#2ea03c" stroke="none" /><path d="M8 5v6M5 8h6" stroke="#fff" strokeWidth="1.600" /></Ico></TrayButton>
          <TrayButton aria-label="Монитор"><Ico s={11}><circle cx="7" cy="8" r="6" fill="#222" stroke="#8fc18f" strokeWidth="1.500" /><path d="M8 7h6v7H8z" fill="#e8e8e8" stroke="#555" /></Ico></TrayButton>
          <TrayButton aria-label="Bluetooth"><Ico s={12}><rect x="2" y="0" width="12" height="16" rx="6" fill="#1583e6" stroke="none" /><path d="M5 5.500l6 5L8 13V3l3 2.500-6 5" stroke="#fff" strokeWidth="1.200" /></Ico></TrayButton>
          <TrayButton aria-label="USB"><Ico s={12} c="#fff" w={1.2}><path d="M4 6h7v9H4zM5.500 6V1h4v5" /></Ico></TrayButton>
          <TrayButton aria-label="Сеть"><Ico s={12} c="#fff" w={1.2}><path d="M5 3h10v8H5zM8 14h5M1 2h4v4H1zM3 6v4" /></Ico></TrayButton>
          <TrayButton aria-label="Громкость"><Ico s={12} c="#fff" w={1.2}><path d="M1 6h2l4-4v12l-4-4H1zM9.500 5.500q2 2.500 0 5M11.500 3.500q4 4.500 0 9" /></Ico></TrayButton>
          <Lang>РУС</Lang>
          <Clock>9:18<br />25.03.2026</Clock>
          <Notify aria-label="Уведомления"><Ico s={14} c="#fff" w={1.1}><path d="M2 2h12v9h-4l-2 3-2-3H2z" /></Ico></Notify>
          <Desktop aria-label="Рабочий стол" />
        </Tray>
      </TaskBar>
    </Page>
  );
}
